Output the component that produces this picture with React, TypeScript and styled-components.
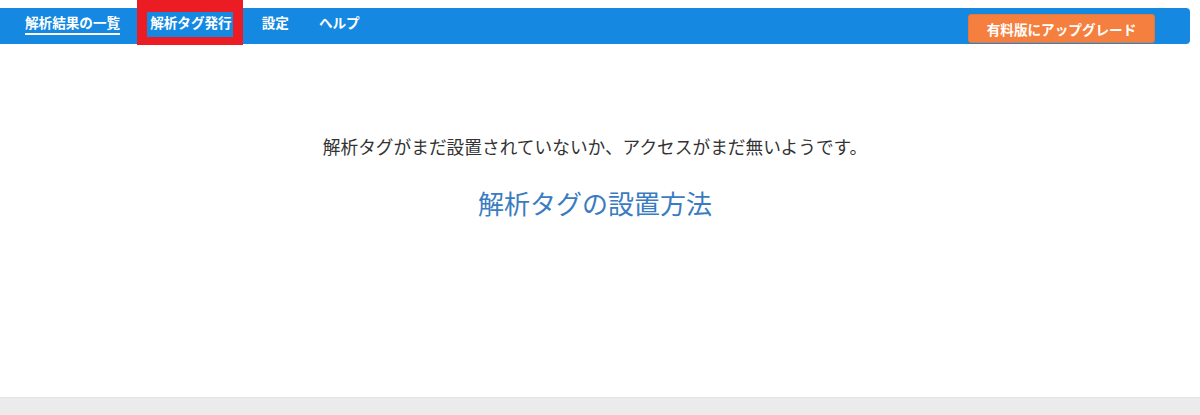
import React from "react";
import styled, { createGlobalStyle } from "styled-components";

const Global = createGlobalStyle`
  html, body { margin: 0; padding: 0; background: #fff; }
  body { font-family: "Noto Sans CJK JP", "Noto Sans", sans-serif; }
  * { box-sizing: border-box; }
`;

const Page = styled.div`
  height: 415px;
  display: flex;
  flex-direction: column;
  overflow: hidden;
`;

const NavBar = styled.nav`
  margin: 8px 10px 0 0;
  height: 36px;
  background: #1589e1;
  border-radius: 0 4px 4px 0;
  display: flex;
  align-items: center;
  padding: 0 35px 0 10px;
`;

const NavList = styled.ul`
  list-style: none;
  margin: 0;
  padding: 0;
  display: flex;
  height: 100%;
  flex: 1;
`;

const NavItem = styled.li<{ $active?: boolean; $marked?: boolean }>`
  position: relative;
  padding: 0 15px;
  height: 100%;
  display: flex;
  align-items: center;
  color: #fff;
  font-size: 13.6px;
  font-weight: 700;
  letter-spacing: 0;
  padding-bottom: 8px;

  span {
    position: relative;
    line-height: 16px;
  }

  ${(p) =>
    p.$active &&
    `
    span::after {
      content: "";
      position: absolute;
      left: 0;
      right: 0;
      bottom: -5px;
      height: 2px;
      background: #fff;
    }
  `}

  ${(p) =>
    p.$marked &&
    `
    &::before {
      content: "";
      position: absolute;
      left: 2px;
      right: 4px;
      top: -8px;
      bottom: -1px;
      border-style: solid;
      border-color: #ec1c24;
      border-width: 12px 10px 8px 10px;
      pointer-events: none;
    }
  `}
`;

const UpgradeButton = styled.button`
  height: 29px;
  width: 187px;
  margin-top: 5px;
  background: #f57f3e;
  border: 1px solid #e9772f;
  border-radius: 3px;
  color: #fff;
  font-family: "Noto Sans CJK JP", "Noto Sans", sans-serif;
  font-size: 13.6px;
  font-weight: 700;
  display: flex;
  align-items: center;
  justify-content: center;
  padding: 0;
  cursor: pointer;
`;

const Main = styled.main`
  flex: 1;
  display: flex;
  flex-direction: column;
  align-items: center;
  padding-top: 89px;
  padding-right: 10px;
`;

const Message = styled.p`
  margin: 0;
  font-size: 17.7px;
  line-height: 26px;
  color: #333;
`;

const GuideLink = styled.a`
  margin-top: 26px;
  font-size: 26px;
  line-height: 36px;
  color: #3a7cc1;
  text-decoration: none;
`;

const Footer = styled.footer`
  height: 18px;
  background: #ebebeb;
  border-top: 1px solid #e4e4e4;
`;

export default function App() {
  return (
    <Page>
      <Global />
      <NavBar>
        <NavList>
          <NavItem $active>
            <span>解析結果の一覧</span>
          </NavItem>
          <NavItem $marked>
            <span>解析タグ発行</span>
          </NavItem>
          <NavItem>
            <span>設定</span>
          </NavItem>
          <NavItem>
            <span>ヘルプ</span>
          </NavItem>
        </NavList>
        <UpgradeButton>有料版にアップグレード</UpgradeButton>
      </NavBar>
      <Main>
        <Message>解析タグがまだ設置されていないか、アクセスがまだ無いようです。</Message>
        <GuideLink href="#">解析タグの設置方法</GuideLink>
      </Main>
      <Footer />
    </Page>
  );
}
